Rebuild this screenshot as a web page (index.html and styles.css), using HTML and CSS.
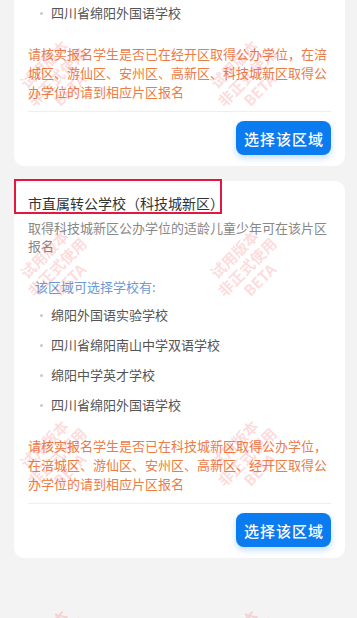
FILE: index.html
```html
<!DOCTYPE html>
<html lang="zh-CN">
<head>
<meta charset="utf-8">
<meta name="viewport" content="width=device-width, initial-scale=1">
<title>选择区域</title>
<link rel="stylesheet" href="styles.css">
</head>
<body>
<div class="page">
  <div class="card">
    <ul class="schools">
      <li>绵阳中学英才学校</li>
      <li>四川省绵阳外国语学校</li>
    </ul>
    <p class="notice">请核实报名学生是否已在经开区取得公办学位，在涪城区、游仙区、安州区、高新区、科技城新区取得公办学位的请到相应片区报名</p>
    <div class="divider"></div>
    <div class="actions"><button class="choose">选择该区域</button></div>
  </div>

  <div class="card">
    <div class="title-wrap">
      <h2 class="title">市直属转公学校（科技城新区）</h2>
      <span class="highlight"></span>
    </div>
    <p class="desc">取得科技城新区公办学位的适龄儿童少年可在该片区报名</p>
    <p class="sub">该区域可选择学校有:</p>
    <ul class="schools">
      <li>绵阳外国语实验学校</li>
      <li>四川省绵阳南山中学双语学校</li>
      <li>绵阳中学英才学校</li>
      <li>四川省绵阳外国语学校</li>
    </ul>
    <p class="notice">请核实报名学生是否已在科技城新区取得公办学位，在涪城区、游仙区、安州区、高新区、经开区取得公办学位的请到相应片区报名</p>
    <div class="divider"></div>
    <div class="actions"><button class="choose">选择该区域</button></div>
  </div>
</div>

<div class="watermarks">
  <div class="wm wm-a1"><span>试用版本</span><span>非正式使用</span><span>BETA</span></div>
  <div class="wm wm-b1"><span>试用版本</span><span>非正式使用</span><span>BETA</span></div>
  <div class="wm wm-a2"><span>试用版本</span><span>非正式使用</span><span>BETA</span></div>
  <div class="wm wm-b2"><span>试用版本</span><span>非正式使用</span><span>BETA</span></div>
  <div class="wm wm-a3"><span>试用版本</span><span>非正式使用</span><span>BETA</span></div>
  <div class="wm wm-b3"><span>试用版本</span><span>非正式使用</span><span>BETA</span></div>
  <div class="wm wm-a4"><span>试用版本</span><span>非正式使用</span><span>BETA</span></div>
  <div class="wm wm-b4"><span>试用版本</span><span>非正式使用</span><span>BETA</span></div>
</div>
</body>
</html>
```

FILE: styles.css
```css
* { box-sizing: border-box; }
html, body {
  margin: 0;
  padding: 0;
  background: #f3f3f4;
  font-family: "Noto Sans CJK SC", "Noto Sans", sans-serif;
  overflow: hidden;
}
.page {
  margin-top: -43px;
  padding: 0 12px 0 14px;
  display: flex;
  flex-direction: column;
  gap: 15px;
}
.card {
  background: #fff;
  border-radius: 10px;
  padding: 11px 14px 11px;
}
.title-wrap {
  position: relative;
  margin: 0 0 5px;
}
.title {
  margin: 0;
  font-size: 14px;
  line-height: 22px;
  font-weight: 400;
  color: #333;
}
.highlight {
  position: absolute;
  left: -14px;
  top: -13px;
  width: 208px;
  height: 35px;
  border: 2px solid #e3173f;
}
.desc {
  margin: 0;
  font-size: 13px;
  line-height: 18px;
  color: #888;
}
.sub {
  margin: 23px 0 0;
  padding-left: 7px;
  font-size: 13px;
  line-height: 18px;
  color: #6b9ad6;
}
.schools {
  list-style: none;
  margin: 4px 0 0;
  padding: 0;
}
.card > .schools:first-child { margin-top: 0; }
.schools li {
  position: relative;
  padding-left: 23px;
  font-size: 13px;
  line-height: 30px;
  height: 30px;
  color: #555;
}
.schools li::before {
  content: "";
  position: absolute;
  left: 12px;
  top: 14px;
  width: 3px;
  height: 3px;
  border-radius: 50%;
  background: #c8c8c8;
}
.notice {
  margin: 16px 0 0;
  font-size: 13px;
  line-height: 19px;
  color: #ec7c46;
}
.divider {
  margin-top: 10px;
  height: 1px;
  background: #eeeeee;
}
.actions {
  margin-top: 9px;
  display: flex;
  justify-content: flex-end;
}
.choose {
  height: 34px;
  padding: 0 7px 0 8px;
  border: 0;
  border-radius: 8px;
  background: #0b7cf0;
  color: #fff;
  font-family: inherit;
  font-size: 15px;
  font-weight: 500;
  letter-spacing: 1px;
  box-shadow: 0 3px 6px rgba(11, 124, 240, 0.25);
}
.watermarks {
  position: fixed;
  inset: 0;
  pointer-events: none;
  overflow: hidden;
  z-index: 10;
}
.wm {
  position: absolute;
  display: flex;
  flex-direction: column;
  align-items: center;
  font-size: 15px;
  line-height: 18px;
  font-weight: 700;
  color: rgba(238, 80, 80, 0.2);
  transform: translate(-50%, -50%) rotate(-45deg);
  white-space: nowrap;
}
.wm-a1 { left: 57px; top: 77px; }
.wm-b1 { left: 247px; top: 77px; }
.wm-a2 { left: 57px; top: 267px; }
.wm-b2 { left: 247px; top: 267px; }
.wm-a3 { left: 57px; top: 457px; }
.wm-b3 { left: 247px; top: 457px; }
.wm-a4 { left: 57px; top: 647px; }
.wm-b4 { left: 247px; top: 647px; }
```
